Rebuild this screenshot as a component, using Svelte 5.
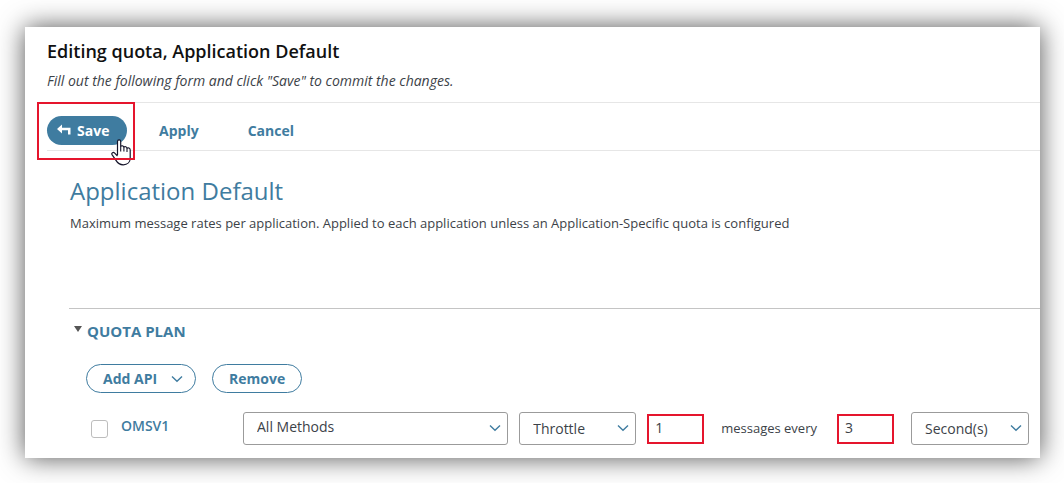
<script>
  let selected = $state(false);
  let method = $state('All Methods');
  let action = $state('Throttle');
  let messages = $state('1');
  let period = $state('3');
  let unit = $state('Second(s)');
  let open = $state(true);
</script>

{#snippet chevron()}
  <svg class="chevron" viewBox="0 0 12 8" aria-hidden="true">
    <path d="M1 1.5 6 6.2 11 1.5" fill="none" stroke="currentColor" stroke-width="1.4" />
  </svg>
{/snippet}

<main class="panel">
  <header>
    <h1>Editing quota, Application Default</h1>
    <p>Fill out the following form and click "Save" to commit the changes.</p>
  </header>

  <div class="toolbar">
    <div class="save-slot">
      <button class="save" type="button">
        <svg class="back" viewBox="0 0 14 12" aria-hidden="true">
          <path d="M0 5 5 .5V3.7H13.5V10.5H11V6.3H5V9.5Z" fill="#fff" />
        </svg>
        Save
      </button>
      <svg class="pointer" viewBox="0 0 20 27" aria-hidden="true">
        <path
          d="M6.5 16V2.4C6.5.4 9.7.4 9.7 2.4V7.5C10.5 6.3 12.7 6.6 12.9 8.2 13.8 7.2 15.8 7.6 16 9.2 17.2 8.4 19.2 9 19.2 10.9V19C19.2 23 16.5 25.8 12.2 25.8 8.5 25.8 6.5 24 5 21.4L1 15.6C.2 13.9 2.2 12.7 3.7 14.1L6.5 17"
          fill="#fff"
          stroke="#15152b"
          stroke-width="1.2"
          stroke-linejoin="round"
        />
        <path d="M9.7 7.5V12.5M12.9 8.2V12.5M16 9.2V13" fill="none" stroke="#15152b" stroke-width="1.1" />
      </svg>
      <span class="highlight"></span>
    </div>
    <button class="link" type="button">Apply</button>
    <button class="link" type="button">Cancel</button>
  </div>

  <section class="intro">
    <h2>Application Default</h2>
    <p>Maximum message rates per application. Applied to each application unless an Application-Specific quota is configured</p>
  </section>

  <section class="plan">
    <h3>
      <button class="toggle" type="button" aria-expanded={open} onclick={() => (open = !open)}>
        <span class="caret"></span>QUOTA PLAN
      </button>
    </h3>
    {#if open}
      <div class="actions">
        <button class="pill" type="button">Add API {@render chevron()}</button>
        <button class="pill" type="button">Remove</button>
      </div>
      <div class="rule">
        <input id="api" type="checkbox" bind:checked={selected} />
        <label class="api" for="api">OMSV1</label>
        <div class="select wide">
          <select class="raised" aria-label="Method" bind:value={method}>
            <option>All Methods</option>
          </select>
          {@render chevron()}
        </div>
        <div class="select">
          <select aria-label="Action" bind:value={action}>
            <option>Throttle</option>
          </select>
          {@render chevron()}
        </div>
        <input class="number" id="messages" type="text" bind:value={messages} aria-label="Message count" />
        <label class="every" for="period">messages every</label>
        <input class="number" id="period" type="text" bind:value={period} />
        <div class="select unit">
          <select aria-label="Unit" bind:value={unit}>
            <option>Second(s)</option>
          </select>
          {@render chevron()}
        </div>
      </div>
    {/if}
  </section>
</main>

<style>
  :global(body) {
    background: #fff;
  }

  .panel {
    margin: 27px 24px 25px 25px;
    padding: 12px 0 13px 22px;
    background: #fff;
    box-shadow: 0 0 25px rgba(0, 0, 0, 0.68);
    font-family: 'Open Sans', 'Noto Sans', sans-serif;
    font-size: 14px;
    color: #3c4248;
  }

  h1, h2, h3, p {
    margin: 0;
  }

  button, input, select {
    box-sizing: border-box;
    margin: 0;
    font: inherit;
  }

  button {
    display: flex;
    align-items: center;
    height: 29px;
    padding: 0;
    border: 0;
    background: none;
    color: #3f7ca0;
    font-weight: 700;
    cursor: pointer;
  }

  header {
    padding-bottom: 11px;
    border-bottom: 1px solid #e6e6e6;
  }

  h1 {
    font-size: 18px;
    line-height: 24px;
    font-weight: 600;
    color: #111;
  }

  header p {
    margin-top: 8px;
    line-height: 20px;
    font-style: italic;
  }

  .toolbar {
    display: flex;
    padding: 13px 0 5px;
    border-bottom: 1px solid #e6e6e6;
  }

  .save-slot {
    position: relative;
    margin-right: 32px;
  }

  .save {
    width: 80px;
    gap: 6px;
    padding-left: 10px;
    border-radius: 15px;
    background: #3f7ca0;
    color: #fff;
  }

  .back {
    width: 14px;
    height: 12px;
    margin-top: -2px;
  }

  .highlight {
    position: absolute;
    inset: -14px -8px -15px -10px;
    border: 2px solid #e5152d;
    pointer-events: none;
  }

  .pointer {
    position: absolute;
    top: 23px;
    left: 64px;
    width: 20px;
    height: 27px;
    pointer-events: none;
  }

  .link {
    margin-right: 49px;
  }

  .intro {
    padding: 23px 0 0 23px;
  }

  h2 {
    font-size: 24px;
    line-height: 34px;
    font-weight: 400;
    color: #3f7ca0;
  }

  .intro p {
    margin-top: 5px;
    font-size: 13px;
    line-height: 20px;
  }

  .plan {
    margin: 75px 0 0 22px;
    border-top: 1px solid #c4c4c4;
  }

  .toggle {
    gap: 5px;
    height: 20px;
    margin: 12px 0 0 5px;
    font-size: 15px;
  }

  .caret {
    margin-bottom: 5px;
    border: 4px solid transparent;
    border-top: 6px solid #555;
    border-bottom: 0;
  }

  .actions {
    display: flex;
    gap: 16px;
    margin: 23px 0 0 17px;
  }

  .pill {
    gap: 14px;
    padding: 0 12px 0 16px;
    border: 1px solid #3f7ca0;
    border-radius: 15px;
  }

  .pill:last-child {
    padding-right: 16px;
  }

  .chevron {
    width: 12px;
    height: 8px;
    color: #3f7ca0;
  }

  .rule {
    display: flex;
    align-items: center;
    margin: 19px 11px 0 22px;
  }

  input[type='checkbox'] {
    appearance: none;
    width: 17px;
    height: 18px;
    border: 1px solid #bdbdbd;
    border-radius: 3px;
    background: #fff;
  }

  input[type='checkbox']:checked {
    background: #3f7ca0;
  }

  .api {
    width: 122px;
    padding: 0 0 6px 13px;
    font-weight: 600;
    color: #3f7ca0;
  }

  .select {
    position: relative;
    width: 117px;
    margin-right: 11px;
  }

  .wide {
    flex: 1;
  }

  .unit {
    width: 118px;
    margin: 0 0 0 17px;
  }

  select {
    appearance: none;
    display: block;
    width: 100%;
    height: 33px;
    padding: 0 28px 0 13px;
    border: 1px solid #9b9b9b;
    border-radius: 3px;
    background: #fff;
    color: inherit;
  }

  .raised {
    padding-bottom: 4px;
  }

  .select .chevron {
    position: absolute;
    top: 12px;
    right: 7px;
    pointer-events: none;
  }

  .number {
    width: 57px;
    height: 30px;
    padding: 0 6px 2px;
    border: 2px solid #e5152d;
    background: #fff;
    color: inherit;
  }

  .every {
    padding: 0 20px 2px 17px;
    font-size: 13px;
    white-space: nowrap;
  }
</style>
